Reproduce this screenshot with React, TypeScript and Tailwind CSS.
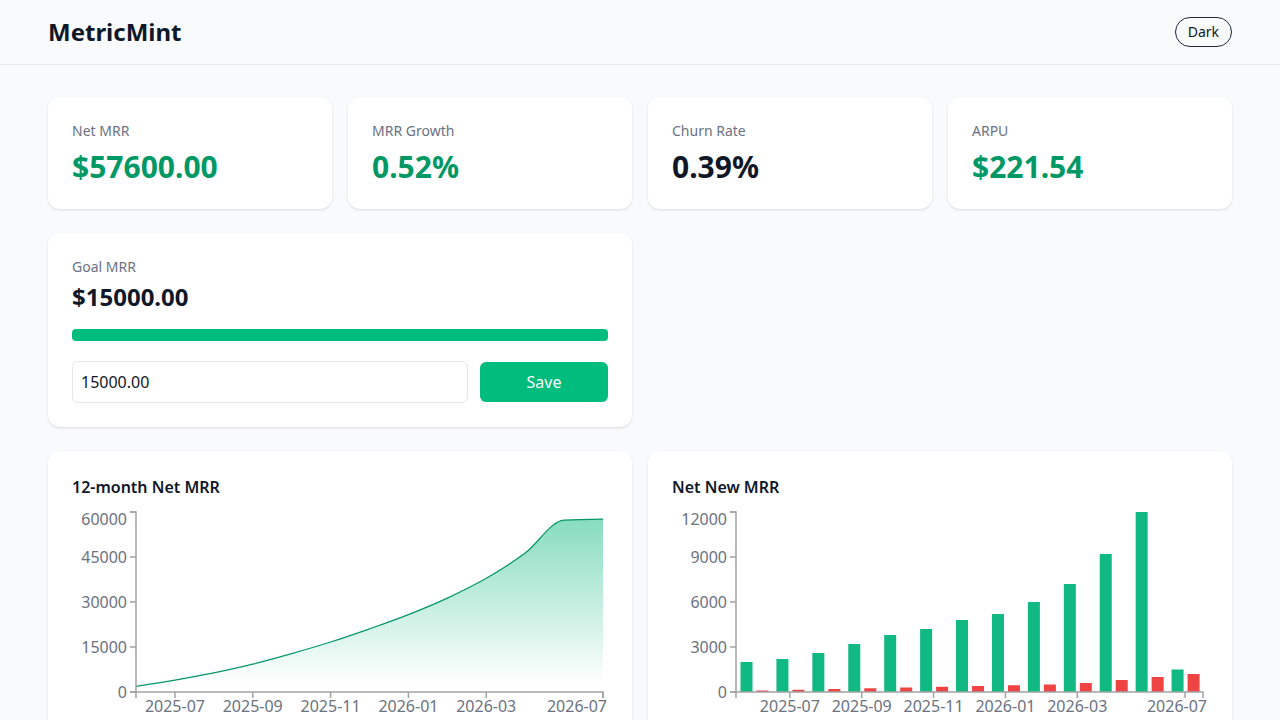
import React from 'react';

type Month = { label: string; newMrr: number; churn: number };

const months: Month[] = [
  { label: '2025-06', newMrr: 2000, churn: 100 },
  { label: '2025-07', newMrr: 2200, churn: 150 },
  { label: '2025-08', newMrr: 2600, churn: 200 },
  { label: '2025-09', newMrr: 3200, churn: 250 },
  { label: '2025-10', newMrr: 3800, churn: 300 },
  { label: '2025-11', newMrr: 4200, churn: 350 },
  { label: '2025-12', newMrr: 4800, churn: 400 },
  { label: '2026-01', newMrr: 5200, churn: 450 },
  { label: '2026-02', newMrr: 6000, churn: 500 },
  { label: '2026-03', newMrr: 7200, churn: 600 },
  { label: '2026-04', newMrr: 9200, churn: 800 },
  { label: '2026-05', newMrr: 12000, churn: 1000 },
  { label: '2026-06', newMrr: 1500, churn: 1200 },
];

// running net MRR
const netSeries = months.reduce<number[]>((acc, m) => {
  const prev = acc.length ? acc[acc.length - 1] : 0;
  acc.push(prev + m.newMrr - m.churn);
  return acc;
}, []);

// x-axis labels: index -> text
const xTicks: [number, string][] = [
  [1, '2025-07'],
  [3, '2025-09'],
  [5, '2025-11'],
  [7, '2026-01'],
  [9, '2026-03'],
  [12, '2026-07'],
];

// plot frame shared by both charts (svg coords)
const W = 536;
const X0 = 64;
const X1 = 531;
const TOP = 13;
const BOTTOM = 193;
const AXIS = '#a3a3a3';
const TICK_TEXT = '#6b7280';

function monotonePath(pts: [number, number][]) {
  const n = pts.length;
  const sign = (v: number) => (v < 0 ? -1 : 1);
  const t: number[] = new Array(n).fill(0);
  for (let i = 1; i < n - 1; i++) {
    const [x0, y0] = pts[i - 1];
    const [x1, y1] = pts[i];
    const [x2, y2] = pts[i + 1];
    const h0 = x1 - x0;
    const h1 = x2 - x1;
    const s0 = (y1 - y0) / h0;
    const s1 = (y2 - y1) / h1;
    const p = (s0 * h1 + s1 * h0) / (h0 + h1);
    t[i] = (sign(s0) + sign(s1)) * Math.min(Math.abs(s0), Math.abs(s1), 0.5 * Math.abs(p)) || 0;
  }
  const h = pts[1][0] - pts[0][0];
  t[0] = (3 * (pts[1][1] - pts[0][1])) / h / 2 - t[1] / 2;
  const hl = pts[n - 1][0] - pts[n - 2][0];
  t[n - 1] = (3 * (pts[n - 1][1] - pts[n - 2][1])) / hl / 2 - t[n - 2] / 2;
  let d = `M${pts[0][0]},${pts[0][1]}`;
  for (let i = 0; i < n - 1; i++) {
    const [xa, ya] = pts[i];
    const [xb, yb] = pts[i + 1];
    const dx = (xb - xa) / 3;
    d += `C${xa + dx},${ya + dx * t[i]},${xb - dx},${yb - dx * t[i + 1]},${xb},${yb}`;
  }
  return d;
}

function YAxis({ max, step }: { max: number; step: number }) {
  const ticks: number[] = [];
  for (let v = 0; v <= max; v += step) ticks.push(v);
  const y = (v: number) => BOTTOM - (v / max) * (BOTTOM - TOP);
  return (
    <g>
      <path d={`M${X0 - 6},${TOP}H${X0}V${BOTTOM}H${X0 - 6}`} fill="none" stroke={AXIS} strokeWidth={1.5} />
      {ticks.map((v) => {
        const ty = y(v);
        const labelY = v === max ? ty + 7 : ty;
        return (
          <g key={v}>
            <line x1={X0 - 6} x2={X0} y1={ty} y2={ty} stroke={AXIS} strokeWidth={1.5} />
            <text x={X0 - 9} y={labelY + 5.7} textAnchor="end" fontSize={16} fill={TICK_TEXT}>
              {v}
            </text>
          </g>
        );
      })}
    </g>
  );
}

function XAxis({ xAt }: { xAt: (i: number) => number }) {
  return (
    <g>
      <path d={`M${X0},${BOTTOM + 6}V${BOTTOM}H${X1}V${BOTTOM + 6}`} fill="none" stroke={AXIS} strokeWidth={1.5} />
      {xTicks.map(([i, label]) => {
        const tx = xAt(i);
        // keep the last label inside the svg
        const clamp = tx + 30 > W - 1;
        return (
          <g key={label}>
            <line x1={tx} x2={tx} y1={BOTTOM} y2={BOTTOM + 6} stroke={AXIS} strokeWidth={1.5} />
            <text
              x={clamp ? W - 1 : tx}
              y={BOTTOM + 20}
              textAnchor={clamp ? 'end' : 'middle'}
              fontSize={16}
              fill={TICK_TEXT}
            >
              {label}
            </text>
          </g>
        );
      })}
    </g>
  );
}

function NetMrrChart() {
  const max = 60000;
  const step = (X1 - X0) / (months.length - 1);
  const xAt = (i: number) => X0 + i * step;
  const yAt = (v: number) => BOTTOM - (v / max) * (BOTTOM - TOP);
  const pts = netSeries.map((v, i) => [xAt(i), yAt(v)] as [number, number]);
  const line = monotonePath(pts);
  const area = `${line}L${X1},${BOTTOM}L${X0},${BOTTOM}Z`;
  return (
    <svg width={W} height={230} className="block" style={{ fontFamily: '"Noto Sans", sans-serif' }}>
      <defs>
        <linearGradient id="netFill" x1="0" y1="0" x2="0" y2="1">
          <stop offset="0%" stopColor="#10b981" stopOpacity={0.5} />
          <stop offset="95%" stopColor="#10b981" stopOpacity={0} />
        </linearGradient>
      </defs>
      <path d={area} fill="url(#netFill)" />
      <path d={line} fill="none" stroke="#059669" strokeWidth={1.2} />
      <YAxis max={max} step={15000} />
      <XAxis xAt={xAt} />
    </svg>
  );
}

function NetNewChart() {
  const max = 12000;
  const band = (X1 - X0) / months.length;
  const yAt = (v: number) => BOTTOM - (v / max) * (BOTTOM - TOP);
  const xAt = (i: number) => X0 + i * band + band / 2;
  return (
    <svg width={W} height={230} className="block" style={{ fontFamily: '"Noto Sans", sans-serif' }}>
      {months.map((m, i) => {
        const bx = X0 + i * band;
        return (
          <g key={m.label}>
            <rect x={bx + 4.5} y={yAt(m.newMrr)} width={12} height={BOTTOM - yAt(m.newMrr)} fill="#10b981" />
            <rect x={bx + 20.5} y={yAt(m.churn)} width={12} height={BOTTOM - yAt(m.churn)} fill="#ef4444" />
          </g>
        );
      })}
      <YAxis max={max} step={3000} />
      <XAxis xAt={xAt} />
    </svg>
  );
}

function StatCard({ label, value, tone }: { label: string; value: string; tone: 'green' | 'dark' }) {
  return (
    <div className="rounded-xl bg-white p-6 shadow-sm">
      <div className="text-sm text-gray-500">{label}</div>
      <div className={`mt-2 text-3xl font-bold ${tone === 'green' ? 'text-emerald-600' : 'text-gray-900'}`}>{value}</div>
    </div>
  );
}

export default function App() {
  return (
    <div className="min-h-screen bg-gray-50 text-gray-900" style={{ fontFamily: '"Noto Sans", sans-serif' }}>
      {/* Header */}
      <header className="flex h-[65px] items-center justify-between border-b border-gray-200 px-12">
        <h1 className="text-2xl font-bold">MetricMint</h1>
        <button className="rounded-full border border-gray-800 px-3 py-1 text-sm text-gray-900">Dark</button>
      </header>

      <main className="px-12 pt-8">
        {/* KPI cards */}
        <div className="grid grid-cols-4 gap-4">
          <StatCard label="Net MRR" value="$57600.00" tone="green" />
          <StatCard label="MRR Growth" value="0.52%" tone="green" />
          <StatCard label="Churn Rate" value="0.39%" tone="dark" />
          <StatCard label="ARPU" value="$221.54" tone="green" />
        </div>

        {/* Goal */}
        <div className="mt-6 grid grid-cols-2 gap-4">
          <div className="rounded-xl bg-white p-6 shadow-sm">
            <div className="text-sm text-gray-500">Goal MRR</div>
            <div className="mt-1 text-2xl font-bold">$15000.00</div>
            <div className="mt-4 h-3 rounded bg-gray-100">
              <div className="h-3 w-full rounded bg-emerald-500" />
            </div>
            <div className="mt-5 flex items-center gap-3">
              <input
                defaultValue="15000.00"
                className="min-w-0 flex-1 rounded-md border border-gray-200 px-2 py-2 text-base text-gray-900 outline-none"
              />
              <button className="h-10 w-32 rounded-md bg-emerald-500 text-base text-white">Save</button>
            </div>
          </div>
        </div>

        {/* Charts */}
        <div className="mt-6 grid grid-cols-2 gap-4">
          <div className="rounded-xl bg-white p-6 shadow-sm">
            <h2 className="text-base font-semibold">12-month Net MRR</h2>
            <NetMrrChart />
          </div>
          <div className="rounded-xl bg-white p-6 shadow-sm">
            <h2 className="text-base font-semibold">Net New MRR</h2>
            <NetNewChart />
          </div>
        </div>
      </main>
    </div>
  );
}
